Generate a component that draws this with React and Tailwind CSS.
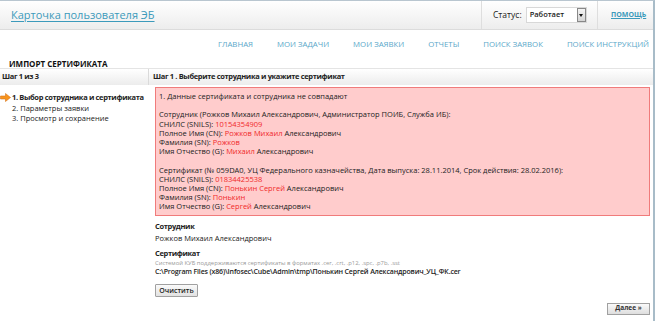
import React from "react";

const R = ({ children }) => <span className="text-[#f02a2a]">{children}</span>;

export default function App() {
  return (
    <div
      className="w-[657px] h-[321px] bg-white overflow-hidden text-[#222]"
      style={{ fontFamily: '"Open Sans", "Noto Sans", sans-serif' }}
    >
      <div className="w-[655px] h-[321px] border-t border-r-2 border-t-[#b9c6d0] border-r-[#a8bcc8] flex flex-col">
        {/* Header */}
        <div className="h-[29px] shrink-0 flex items-stretch bg-gradient-to-b from-white to-[#ededed] border-b border-[#dcdcdc]">
          <div className="flex-1 flex items-center pl-[11px]">
            <a className="text-[11px] text-[#3c9abb] underline underline-offset-2">Карточка пользователя ЭБ</a>
          </div>
          <div className="w-[116px] border-l border-[#dedede] flex items-center pl-[11px] gap-[4px]">
            <span className="text-[8.5px] text-[#222]">Статус:</span>
            <div className="w-[61px] h-[16px] bg-white border border-[#d8d8d8] flex items-center justify-between">
              <span className="text-[7.5px] pl-[3px] font-semibold text-[#222]">Работает</span>
              <div className="w-[9px] h-[14px] bg-gradient-to-b from-[#f4f4f4] to-[#d4d4d4] border border-[#888] flex items-center justify-center">
                <div className="w-0 h-0 border-l-[2.5px] border-r-[2.5px] border-t-[3px] border-l-transparent border-r-transparent border-t-[#111]" />
              </div>
            </div>
          </div>
          <div className="w-[56px] border-l border-[#dedede] flex items-center pl-[13px]">
            <a className="text-[7px] font-bold text-[#3c9abb] underline underline-offset-1">ПОМОЩЬ</a>
          </div>
        </div>

        {/* Nav */}
        <div className="h-[27px] shrink-0 pt-[2px] flex items-center justify-end pr-[4px] gap-[24px] text-[7.8px] text-[#5aa7c9] uppercase">
          <span>Главная</span>
          <span>Мои задачи</span>
          <span>Мои заявки</span>
          <span>Отчеты</span>
          <span>Поиск заявок</span>
          <span>Поиск инструкций</span>
        </div>

        {/* Title */}
        <div className="h-[11px] shrink-0 pl-[9px]">
          <div className="mt-[1px] leading-[12px] text-[8px] font-bold text-[#111]">ИМПОРТ СЕРТИФИКАТА</div>
        </div>

        {/* Step bar */}
        <div className="h-[17px] shrink-0 flex border-t border-[#e4e4e4] bg-gradient-to-b from-white to-[#ececec] text-[7.5px] font-bold tracking-[-0.35px] text-[#222]">
          <div className="w-[149px] border-r border-[#dadada] flex items-center pl-[2px]">Шаг 1 из 3</div>
          <div className="flex-1 flex items-center pl-[4px]">Шаг 1 . Выберите сотрудника и укажите сертификат</div>
        </div>

        {/* Content */}
        <div className="flex flex-1">
          <div className="w-[155px] pt-[7px] text-[7.5px] leading-[10.5px]">
            <div className="flex items-center">
              <svg width="11" height="9" viewBox="0 0 11 9" className="mr-[1px]">
                <path d="M0.5 3 H5.5 V0.5 L10.5 4.5 L5.5 8.5 V6 H0.5 Z" fill="#f7941d" stroke="#d9731a" strokeWidth="0.6" />
              </svg>
              <span className="font-bold tracking-[-0.35px]">1. Выбор сотрудника и сертификата</span>
            </div>
            <div className="pl-[12px]">2. Параметры заявки</div>
            <div className="pl-[12px]">3. Просмотр и сохранение</div>
          </div>

          <div className="flex-1 pt-[2px] pr-[3px] flex flex-col">
            <div className="bg-[#ffcccc] border border-[#f07b7b] pt-[4px] pb-[3px] pl-[3px] text-[7.5px] leading-[9.2px]">
              <div>1. Данные сертификата и сотрудника не совпадают</div>
              <div className="h-[9.2px]" />
              <div>Сотрудник (Рожков Михаил Александрович, Администратор ПОИБ, Служба ИБ):</div>
              <div>СНИЛС (SNILS): <R>10154354909</R></div>
              <div>Полное Имя (CN): <R>Рожков Михаил</R> Александрович</div>
              <div>Фамилия (SN): <R>Рожков</R></div>
              <div>Имя Отчество (G): <R>Михаил</R> Александрович</div>
              <div className="h-[9.2px]" />
              <div>Сертификат (№ 059DA0, УЦ Федерального казначейства, Дата выпуска: 28.11.2014, Срок действия: 28.02.2016):</div>
              <div>СНИЛС (SNILS): <R>01834425538</R></div>
              <div>Полное Имя (CN): <R>Понькин Сергей</R> Александрович</div>
              <div>Фамилия (SN): <R>Понькин</R></div>
              <div>Имя Отчество (G): <R>Сергей</R> Александрович</div>
            </div>

            <div className="text-[7.5px] mt-[5px] font-bold tracking-[-0.35px] leading-[10px]">Сотрудник</div>
            <div className="text-[7.5px] mt-[2px] leading-[10px]">Рожков Михаил Александрович</div>
            <div className="text-[7.5px] mt-[5px] font-bold tracking-[-0.35px] leading-[10px]">Сертификат</div>
            <div className="text-[5.9px] text-[#999] leading-[8px] mt-[1px]">Системой КУБ поддерживаются сертификаты в форматах .cer, .crt, .p12, .spc, .p7b, .sst</div>
            <div className="text-[7px] font-semibold tracking-[-0.15px] leading-[10px]">C:\Program Files (x86)\Infosec\Cube\Admin\tmp\Понькин Сергей Александрович_УЦ_ФК.cer</div>
            <div className="flex mt-[7px]">
              <button className="w-[43px] h-[13px] text-[7px] font-semibold text-[#222] bg-gradient-to-b from-[#fafafa] to-[#e2e2e2] border border-[#a0a0a0] rounded-[1px] leading-none">Очистить</button>
            </div>
            <div className="flex justify-end mt-[6px]">
              <button className="w-[43px] h-[12px] text-[6.5px] font-bold text-[#333] bg-gradient-to-b from-[#fafafa] to-[#dedede] border border-[#a0a0a0] leading-none">Далее »</button>
            </div>
          </div>
        </div>
      </div>
    </div>
  );
}
